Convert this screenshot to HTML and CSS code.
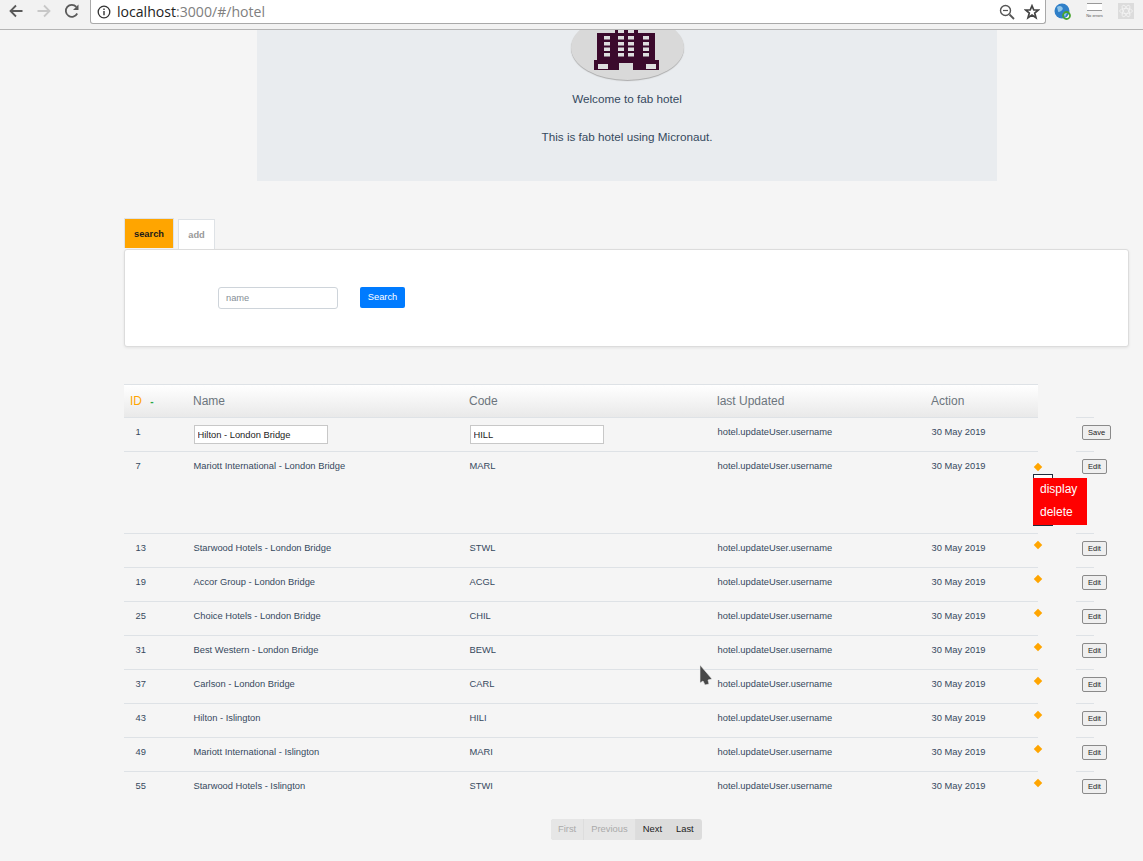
FILE: index.html
```html
<!DOCTYPE html>
<html lang="en">
<head>
  <meta charset="UTF-8" />
  <title>Fab Hotel</title>
  <link rel="stylesheet" href="styles.css">
</head>
<body>

  <div class="toolbar">
    <svg class="nav-icon" viewBox="0 0 16 16"><path d="M14.5 8H3M8 2.5 2.5 8 8 13.5" fill="none" stroke="#5a5a5a" stroke-width="1.8"/></svg>
    <svg class="nav-icon" viewBox="0 0 16 16"><path d="M1.5 8H13M8 2.5 13.500 8 8 13.5" fill="none" stroke="#c8c8c8" stroke-width="1.8"/></svg>
    <svg class="nav-icon" viewBox="0 0 16 16"><path d="M13.200 10.500A6 6 0 1 1 12.300 3.800" fill="none" stroke="#5a5a5a" stroke-width="1.800"/><path d="M14.500 1.500V7H9z" fill="#5a5a5a"/></svg>
    <div class="address">
      <svg class="info-icon" viewBox="0 0 14 14"><circle cx="7" cy="7" r="5.800" fill="none" stroke="#333" stroke-width="1.300"/><path d="M7 6v4.200M7 3.500v1.400" stroke="#333" stroke-width="1.400"/></svg>
      <span class="host">localhost</span><span class="url-rest">:3000/#/hotel</span>
      <svg class="zoom-icon" viewBox="0 0 16 16"><circle cx="6.500" cy="6.500" r="5" fill="none" stroke="#555" stroke-width="1.400"/><path d="M10.500 10.500 15 15" stroke="#555" stroke-width="1.800"/><path d="M4 6.500h5" stroke="#555" stroke-width="1.200"/></svg>
      <svg class="star-icon" viewBox="0 0 16 16"><path d="M8 1.800 9.800 6h4.600l-3.700 3 1.300 4.700L8 11l-4 2.700L5.300 9 1.600 6h4.600z" fill="none" stroke="#444" stroke-width="1.700"/></svg>
    </div>
    <div class="extensions">
      <svg class="ext-globe" viewBox="0 0 18 18"><circle cx="8" cy="8" r="7.500" fill="#2f7fc8"/><path d="M3 4q3-2 5 0t-1 4-3 0zM9 10q3-1 4 0l-2 4z" fill="#8fc4e8"/><circle cx="12.500" cy="12.500" r="3.500" fill="none" stroke="#4aa52e" stroke-width="1.800"/></svg>
      <div class="ext-errors"><span class="ext-box"></span><span class="ext-label">No errors</span></div>
      <div class="ext-react">
        <svg viewBox="0 0 20 20"><g fill="none" stroke="#f4f4f4" stroke-width="1"><ellipse cx="10" cy="10" rx="8" ry="3.200"/><ellipse cx="10" cy="10" rx="8" ry="3.200" transform="rotate(60 10 10)"/><ellipse cx="10" cy="10" rx="8" ry="3.200" transform="rotate(120 10 10)"/></g></svg>
      </div>
    </div>
  </div>

  <div class="hero">
    <div class="hero-pic">
      <svg class="hotel-icon" viewBox="0 0 65 48">
        <path fill="#3b0a2c" d="M21 2h23v9h17v27h4v10H39v-7H25v7H0V38h3V11h18z"/>
        <g fill="#dedede">
          <rect x="10" y="14" width="6" height="3.500"/><rect x="10" y="20" width="6" height="3.500"/><rect x="10" y="25.500" width="6" height="3.500"/><rect x="10" y="31" width="6" height="3.500"/>
          <rect x="24" y="8" width="6" height="3"/><rect x="34" y="8" width="6" height="3"/>
          <rect x="24" y="14" width="6" height="3.500"/><rect x="34" y="14" width="6" height="3.500"/>
          <rect x="24" y="20" width="6" height="3.500"/><rect x="34" y="20" width="6" height="3.500"/>
          <rect x="24" y="25.500" width="6" height="3.500"/><rect x="34" y="25.500" width="6" height="3.500"/>
          <rect x="24" y="31" width="6" height="3.500"/><rect x="34" y="31" width="6" height="3.500"/>
          <rect x="49" y="14" width="6" height="3.500"/><rect x="49" y="20" width="6" height="3.500"/><rect x="49" y="25.500" width="6" height="3.500"/><rect x="49" y="31" width="6" height="3.500"/>
          <rect x="4" y="42" width="10" height="5"/><rect x="52" y="42" width="10" height="5"/>
        </g>
      </svg>
    </div>
    <p class="welcome">Welcome to fab hotel</p>
    <p class="about">This is fab hotel using Micronaut.</p>
  </div>

  <div class="content">
    <div class="tabs">
      <span class="tab tab-active">search</span>
      <span class="tab">add</span>
    </div>
    <div class="search-card">
      <input class="search-input" type="text" placeholder="name" />
      <button class="search-btn">Search</button>
    </div>

    <div class="table-head">
      <div class="cols">
        <span class="th th-id">ID <i class="sort">-</i></span>
        <span class="th">Name</span>
        <span class="th">Code</span>
        <span class="th">last Updated</span>
        <span class="th">Action</span>
      </div>
    </div>

    <div class="row">
      <div class="cols cells">
        <span class="td-id">1</span>
        <span><input class="edit-input" type="text" value="Hilton - London Bridge" /></span>
        <span><input class="edit-input" type="text" value="HILL" /></span>
        <span>hotel.updateUser.username</span>
        <span>30 May 2019</span>
      </div>
      <div class="edit-cell"><button class="row-btn">Save</button></div>
    </div>

    <div class="row row-open">
      <div class="cols cells">
        <span class="td-id">7</span>
        <span>Mariott International - London Bridge</span>
        <span>MARL</span>
        <span>hotel.updateUser.username</span>
        <span>30 May 2019</span>
      </div>
      <i class="dot"></i>
      <div class="menu-back"></div>
      <div class="menu">
        <span>display</span>
        <span>delete</span>
      </div>
      <div class="edit-cell"><button class="row-btn">Edit</button></div>
    </div>

    <div class="row">
      <div class="cols cells">
        <span class="td-id">13</span>
        <span>Starwood Hotels - London Bridge</span>
        <span>STWL</span>
        <span>hotel.updateUser.username</span>
        <span>30 May 2019</span>
      </div>
      <i class="dot"></i>
      <div class="edit-cell"><button class="row-btn">Edit</button></div>
    </div>

    <div class="row">
      <div class="cols cells">
        <span class="td-id">19</span>
        <span>Accor Group - London Bridge</span>
        <span>ACGL</span>
        <span>hotel.updateUser.username</span>
        <span>30 May 2019</span>
      </div>
      <i class="dot"></i>
      <div class="edit-cell"><button class="row-btn">Edit</button></div>
    </div>

    <div class="row">
      <div class="cols cells">
        <span class="td-id">25</span>
        <span>Choice Hotels - London Bridge</span>
        <span>CHIL</span>
        <span>hotel.updateUser.username</span>
        <span>30 May 2019</span>
      </div>
      <i class="dot"></i>
      <div class="edit-cell"><button class="row-btn">Edit</button></div>
    </div>

    <div class="row">
      <div class="cols cells">
        <span class="td-id">31</span>
        <span>Best Western - London Bridge</span>
        <span>BEWL</span>
        <span>hotel.updateUser.username</span>
        <span>30 May 2019</span>
      </div>
      <i class="dot"></i>
      <div class="edit-cell"><button class="row-btn">Edit</button></div>
    </div>

    <div class="row">
      <div class="cols cells">
        <span class="td-id">37</span>
        <span>Carlson - London Bridge</span>
        <span>CARL</span>
        <span>hotel.updateUser.username</span>
        <span>30 May 2019</span>
      </div>
      <i class="dot"></i>
      <div class="edit-cell"><button class="row-btn">Edit</button></div>
    </div>

    <div class="row">
      <div class="cols cells">
        <span class="td-id">43</span>
        <span>Hilton - Islington</span>
        <span>HILI</span>
        <span>hotel.updateUser.username</span>
        <span>30 May 2019</span>
      </div>
      <i class="dot"></i>
      <div class="edit-cell"><button class="row-btn">Edit</button></div>
    </div>

    <div class="row">
      <div class="cols cells">
        <span class="td-id">49</span>
        <span>Mariott International - Islington</span>
        <span>MARI</span>
        <span>hotel.updateUser.username</span>
        <span>30 May 2019</span>
      </div>
      <i class="dot"></i>
      <div class="edit-cell"><button class="row-btn">Edit</button></div>
    </div>

    <div class="row">
      <div class="cols cells">
        <span class="td-id">55</span>
        <span>Starwood Hotels - Islington</span>
        <span>STWI</span>
        <span>hotel.updateUser.username</span>
        <span>30 May 2019</span>
      </div>
      <i class="dot"></i>
      <div class="edit-cell"><button class="row-btn">Edit</button></div>
    </div>

    <div class="pager">
      <span class="page page-off">First</span>
      <span class="page page-off">Previous</span>
      <span class="page">Next</span>
      <span class="page">Last</span>
    </div>
  </div>

  <svg class="cursor" viewBox="0 0 14 23"><path d="M1 1 13 15 9 16 10 20 6 21 4 17 1 19z" fill="#484848" stroke="#eee" stroke-width="0.600"/></svg>

</body>
</html>
```

FILE: styles.css
```css
html, body {
  height: 861px;
  overflow: hidden;
}
body {
  font-family: 'Liberation Sans', Arial, sans-serif;
  background: #f5f5f5;
  color: #35495e;
  margin: 0;
  padding: 0;
  position: relative;
}

/* browser bar */
.toolbar {
  height: 29px;
  background: #f2f2f2;
  border-bottom: 1px solid #b4b4b4;
  display: flex;
  align-items: flex-start;
  padding-left: 8px;
}
.nav-icon {
  width: 16px;
  height: 16px;
  margin: 3px 12px 0 0;
}
.address {
  width: 956px;
  height: 24px;
  margin-left: -2px;
  box-sizing: border-box;
  background: white;
  border: 1px solid #a9a9a9;
  border-top: none;
  border-radius: 0 0 3px 3px;
  display: flex;
  align-items: center;
  padding: 0 5px 0 6px;
  font-family: 'Open Sans', sans-serif;
  font-size: 14.1px;
}
.info-icon {
  width: 14px;
  height: 14px;
  margin-right: 6px;
}
.host {
  color: #222;
}
.url-rest {
  color: #808080;
  flex: 1;
}
.zoom-icon {
  width: 16px;
  height: 16px;
  margin-right: 9px;
}
.star-icon {
  width: 16px;
  height: 16px;
}
.extensions {
  display: flex;
  align-items: flex-start;
}
.ext-globe {
  width: 18px;
  height: 18px;
  margin: 3px 0 0 8px;
}
.ext-errors {
  width: 26px;
  margin: 3px 0 0 9.5px;
  display: flex;
  flex-direction: column;
  align-items: center;
}
.ext-box {
  width: 15px;
  height: 6px;
  background: white;
  border-top: 1px solid #999;
  border-bottom: 1px solid #999;
}
.ext-label {
  font-size: 4px;
  color: #555;
  margin-top: 2px;
  white-space: nowrap;
}
.ext-react {
  width: 16px;
  height: 16px;
  margin: 3px 0 0 10.5px;
  background: #dcdcdc;
}
.ext-react svg {
  width: 16px;
  height: 16px;
  display: block;
}

/* jumbotron */
.hero {
  width: 740px;
  height: 151px;
  margin-left: 257px;
  background: #e9ecef;
  overflow: hidden;
  text-align: center;
  font-size: 11.7px;
}
.hero-pic {
  width: 113px;
  height: 65px;
  margin: -15px auto 0;
  border-radius: 50%;
  background: #d9d9d9;
  box-shadow: 0 1px 1px #aaa;
  position: relative;
  display: flex;
  justify-content: center;
}
.hotel-icon {
  width: 65px;
  height: 48px;
  margin: 7px 2px 0 0;
}
.welcome {
  margin: 12px 0 0;
}
.about {
  margin: 25px 0 0;
}

.content {
  margin-left: 124px;
}

/* tabs */
.tabs {
  display: flex;
  align-items: flex-start;
  margin-top: 37px;
  height: 31px;
}
.tab {
  width: 37px;
  height: 30px;
  margin: 1px 0 0 4px;
  box-sizing: border-box;
  background: white;
  border: 1px solid #dee2e6;
  border-bottom: none;
  color: #999;
  font-size: 9.300px;
  font-weight: bold;
  text-align: center;
  line-height: 30px;
}
.tab-active {
  width: 50px;
  margin: 0;
  background: orange;
  color: #1a1a1a;
  line-height: 30px;
}
.search-card {
  width: 1005px;
  height: 98px;
  box-sizing: border-box;
  background: white;
  border: 1px solid #dcdcdc;
  border-radius: 3px;
  box-shadow: 0 1px 3px rgba(0,0,0,0.08);
  display: flex;
  align-items: flex-start;
  padding: 37px 0 0 93px;
}
.search-input {
  width: 120px;
  height: 22px;
  box-sizing: border-box;
  border: 1px solid #ced4da;
  border-radius: 3px;
  padding: 0 7px;
  font-family: inherit;
  font-size: 9.300px;
}
.search-input::placeholder {
  color: #868e96;
}
.search-btn {
  width: 45px;
  height: 21px;
  margin-left: 22px;
  padding: 0 0 2px;
  border: none;
  border-radius: 2px;
  background: #007bff;
  color: white;
  font-family: inherit;
  font-size: 9.300px;
}

/* table */
.cols {
  width: 914px;
  display: grid;
  grid-template-columns: 69.5px 276px 248px 214px 106.5px;
}
.table-head {
  margin-top: 37px;
}
.table-head .cols {
  height: 33px;
  box-sizing: border-box;
  border-top: 1px solid #dee2e6;
  background: linear-gradient(#ffffff, #e9e9e9);
  align-items: center;
}
.th {
  color: #6c757d;
  font-size: 12px;
  margin-left: -0.5px;
}
.th-id {
  color: orange;
  padding-left: 6.5px;
}
.sort {
  color: #28a745;
  font-style: normal;
  font-size: 10px;
  font-weight: bold;
  margin-left: 5px;
}
.row {
  display: flex;
  height: 34px;
  position: relative;
}
.row-open {
  height: 82px;
}
.cells {
  box-sizing: border-box;
  border-top: 1px solid #dee2e6;
  font-size: 9.350px;
  padding-top: 9px;
  align-content: start;
}
.td-id {
  padding-left: 11.5px;
}
.edit-input {
  width: 134px;
  height: 19px;
  box-sizing: border-box;
  margin-top: -2px;
  border: 1px solid #c8c8c8;
  background: white;
  padding: 0 3px;
  color: #222;
  font-family: inherit;
  font-size: 9.350px;
  display: block;
}
.edit-cell {
  width: 18px;
  height: 10px;
  margin-left: 38px;
  border-top: 1px solid #dee2e6;
  padding-left: 6px;
  box-sizing: border-box;
}
.row-btn {
  display: block;
  height: 15px;
  margin-top: 7px;
  padding: 0 5px;
  border: 1px solid #8a8a8a;
  border-radius: 2px;
  background: #efefef;
  color: #222;
  font-family: inherit;
  font-size: 7.500px;
  white-space: nowrap;
}
.dot {
  position: absolute;
  left: 911px;
  top: 9px;
  width: 6px;
  height: 6px;
  background: orange;
  transform: rotate(45deg);
}
.row-open .dot {
  top: 12.5px;
}
.menu-back {
  position: absolute;
  left: 909px;
  top: 23px;
  width: 20px;
  height: 52px;
  box-sizing: border-box;
  background: white;
  border: 1px solid #1f2d3d;
}
.menu {
  position: absolute;
  left: 909px;
  top: 27px;
  width: 54px;
  height: 47px;
  background: red;
  color: #fdfdfd;
  font-size: 12px;
  display: flex;
  flex-direction: column;
  gap: 9px;
  padding: 4px 0 0 7px;
  box-sizing: border-box;
}

/* pagination */
.pager {
  display: flex;
  width: 151px;
  height: 21px;
  margin: 14px 0 0 427px;
  border-radius: 3px;
  overflow: hidden;
  background: #dcdcdc;
  font-size: 9.400px;
  color: #222;
}
.page {
  padding: 0 7px;
  line-height: 20px;
}
.page-off {
  background: #e6e6e6;
  color: #aaa;
  border-right: 1px solid #ddd;
}

.cursor {
  position: absolute;
  left: 699px;
  top: 664px;
  width: 14px;
  height: 23px;
}
```
